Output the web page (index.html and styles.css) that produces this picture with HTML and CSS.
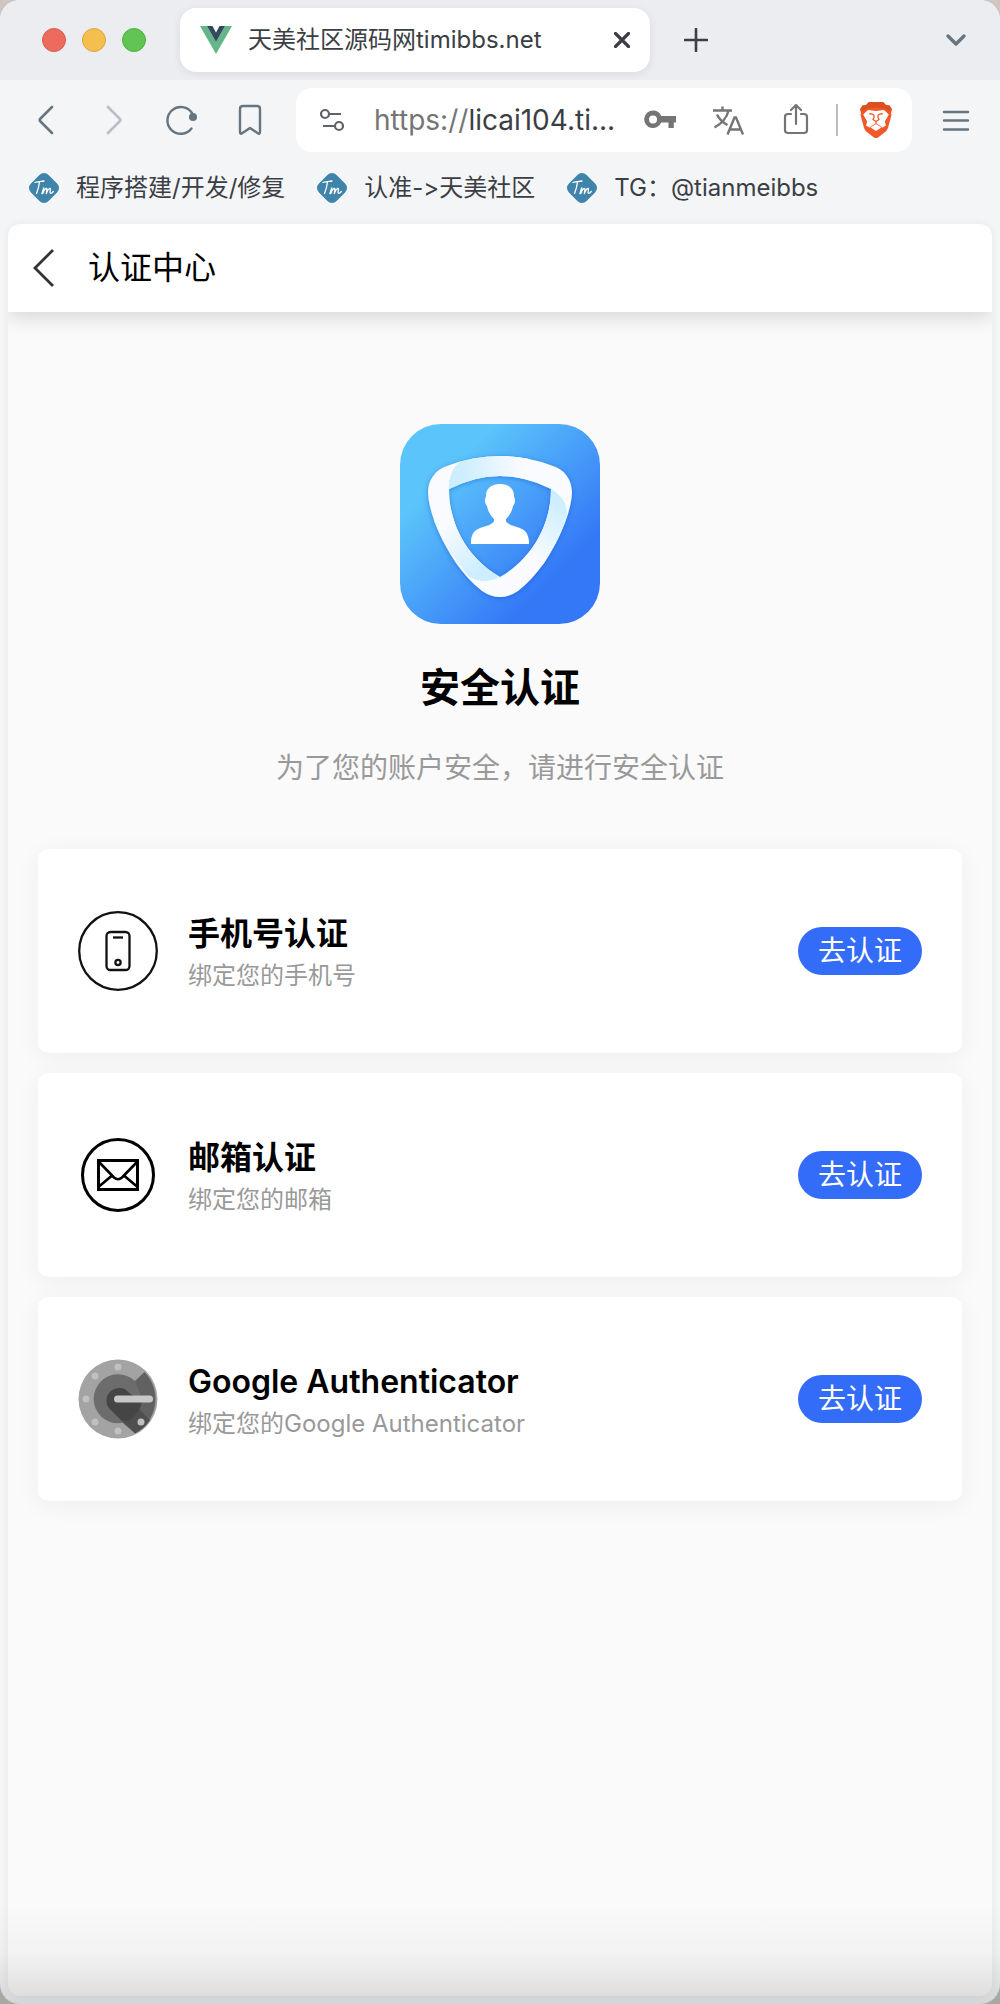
FILE: index.html
```html
<!DOCTYPE html>
<html lang="zh-CN">
<head>
<meta charset="utf-8">
<meta name="viewport" content="width=device-width, initial-scale=1">
<title>天美社区源码网timibbs.net</title>
<link rel="stylesheet" href="styles.css">
</head>
<body>
<svg class="sprite" aria-hidden="true">
  <symbol id="tm" viewBox="0 0 30 30">
    <rect x="2.500" y="2.500" width="25" height="25" rx="6.500" transform="rotate(45 15 15)" fill="#3f85ab"/>
    <path d="M6 9.500C9 8 12 8.500 15 8M10.500 9C10 13 9 17 7.500 20.500M13 20.500C13.500 18.500 14.300 16.500 14.800 14.800C14.500 17.500 14 19 13.800 20.500C15 17 16.500 15.500 17.500 15.300C18.400 15.300 17.500 18.500 17.300 20.500C18.500 17.500 20 15.500 21 15.300C22.300 15.300 20.300 19.500 21.300 20.300C22.300 20.800 23.500 19.500 24.300 18.500" fill="none" stroke="#fff" stroke-width="1.300" stroke-linecap="round" stroke-linejoin="round"/>
  </symbol>
</svg>
<div class="window">
  <header class="tab-bar">
    <div class="lights">
      <button class="light light-close" aria-label="关闭窗口"></button>
      <button class="light light-min" aria-label="最小化"></button>
      <button class="light light-max" aria-label="最大化"></button>
    </div>
    <div class="tab">
      <svg width="32" height="28" viewBox="0 0 32 28" aria-hidden="true"><path d="M0 0H7L16 16L25 0H32L16 28Z" fill="#64b587"/><path d="M7 0H12.500L16 6.500L19.500 0H25L16 16Z" fill="#35495e"/></svg>
      <span class="tab-title">天美社区源码网timibbs.net</span>
      <button class="icon-button tab-close" aria-label="关闭标签页"><svg width="16" height="16" viewBox="0 0 16 16"><path d="M1.500 1.500L14.500 14.500M14.500 1.500L1.500 14.500" fill="none" stroke="#3b3e44" stroke-width="3.200" stroke-linecap="round"/></svg></button>
    </div>
    <button class="icon-button tab-new" aria-label="新标签页"><svg width="24" height="24" viewBox="0 0 24 24"><path d="M12 1V23M1 12H23" stroke="#3b3e44" stroke-width="2.600" stroke-linecap="round"/></svg></button>
    <button class="icon-button tab-list" aria-label="搜索标签页"><svg width="24" height="16" viewBox="0 0 24 16"><path d="M4 4L12 12L20 4" fill="none" stroke="#66757f" stroke-width="3.400" stroke-linecap="round" stroke-linejoin="round"/></svg></button>
  </header>

  <nav class="toolbar" aria-label="浏览器工具栏">
    <div class="nav-buttons">
      <button class="icon-button" aria-label="后退"><svg width="40" height="40" viewBox="0 0 40 40"><path d="M26 7L14.500 18.500Q13 20 14.500 21.500L26 33" fill="none" stroke="#66757f" stroke-width="2.600" stroke-linecap="round"/></svg></button>
      <button class="icon-button" aria-label="前进" disabled><svg width="40" height="40" viewBox="0 0 40 40"><path d="M14 7L25.500 18.500Q27 20 25.500 21.500L14 33" fill="none" stroke="#b7bec5" stroke-width="2.600" stroke-linecap="round"/></svg></button>
      <button class="icon-button" aria-label="重新加载"><svg width="40" height="40" viewBox="0 0 40 40"><path d="M30 13A13.400 13.400 0 1 0 29.500 28.500" fill="none" stroke="#66757f" stroke-width="2.400" stroke-linecap="round"/><circle cx="31" cy="17" r="4" fill="#66757f"/></svg></button>
      <button class="icon-button" aria-label="添加书签"><svg width="40" height="40" viewBox="0 0 40 40"><path d="M13 6H27Q30 6 30 9V32Q30 35 27.500 33L20 28L12.500 33Q10 35 10 32V9Q10 6 13 6Z" fill="none" stroke="#66757f" stroke-width="2.400" stroke-linejoin="round"/></svg></button>
    </div>
    <div class="omnibox">
      <button class="icon-button" aria-label="网站信息"><svg width="24" height="24" viewBox="0 0 24 24"><g fill="none" stroke="#5f6368" stroke-width="2.200"><circle cx="5" cy="6" r="4"/><path d="M9 6H21M3 18H15"/><circle cx="19" cy="18" r="4"/></g></svg></button>
      <div class="url" role="textbox" contenteditable="true" spellcheck="false" aria-label="地址栏"><span class="url-scheme">https://</span>licai104.ti...</div>
      <div class="omnibox-actions">
        <button class="icon-button" aria-label="密码"><svg width="32" height="32" viewBox="0 0 32 32"><path fill-rule="evenodd" d="M9 6.500A8.700 8.700 0 0 1 17.200 12H32V18.500H29.800V24H24.500V18.500H17.200A8.800 8.800 0 1 1 9 6.500ZM9 11.500A4 4 0 1 0 9 19.500A4 4 0 0 0 9 11.500Z" fill="#757575"/></svg></button>
        <button class="icon-button" aria-label="翻译"><svg width="32" height="32" viewBox="0 0 32 32"><g fill="none" stroke="#757575" stroke-width="2.400"><path d="M1 6.500H20M10.500 2.500V6.500M16.500 7C14.500 14 9 20 2.500 23.500M5 10.500C7 15 11 18.500 15.500 21"/><path d="M15.500 30.500L22.500 13.500H24L31 30.500M18 25.500H28.500"/></g></svg></button>
        <button class="icon-button" aria-label="分享"><svg width="32" height="32" viewBox="0 0 32 32"><g fill="none" stroke="#757575" stroke-width="2.200" stroke-linecap="round" stroke-linejoin="round"><path d="M16 20V1.500M11 6L16 1L21 6M11 10H8Q5 10 5 13V26Q5 29 8 29H24Q27 29 27 26V13Q27 10 24 10H21"/></g></svg></button>
        <span class="divider"></span>
        <button class="icon-button" aria-label="Brave 防护"><svg width="32" height="36" viewBox="0 0 32 36"><path d="M9 0H23L26 3L29.500 3.500L32 7.500L31 11L31.500 13L28 26Q27 29 24.500 30.500L18 35.500Q16 36.500 14 35.500L7.500 30.500Q5 29 4 26L0.500 13L1 11L0 7.500L2.500 3.500L6 3Z" fill="#f1592a"/><path d="M9 0H23L26 3L29.500 3.500L32 7.500L29 9.500L24 6H8L3 9.500L0 7.500L2.500 3.500L6 3Z" fill="#dd4f20"/><path d="M8 8L16 9L24 8L28.800 12.500L24.800 19.500L26 23.500L22.500 25.500L16 21L9.500 25.500L6 23.500L7.200 19.500L3.200 12.500Z" fill="#fff"/><path d="M16 22L21.500 25.500L16 29L10.500 25.500Z" fill="#fff"/><path d="M9 12Q11.500 11.200 14 13.200V15.500L13 17.500L16 19.500L19 17.500L18 15.500V13.200Q20.500 11.200 23 12M16 19.500V21.500" fill="none" stroke="#f1592a" stroke-width="1.300"/></svg></button>
      </div>
    </div>
    <button class="icon-button menu" aria-label="菜单"><svg width="28" height="24" viewBox="0 0 28 24"><path d="M2 4H26M2 12.500H26M2 21.500H26" stroke="#66757f" stroke-width="2.400" stroke-linecap="round"/></svg></button>
  </nav>

  <nav class="bookmarks" aria-label="书签">
    <a href="#build" class="bookmark"><svg width="30" height="30" aria-hidden="true"><use href="#tm"/></svg>程序搭建/开发/修复</a>
    <a href="#community" class="bookmark"><svg width="30" height="30" aria-hidden="true"><use href="#tm"/></svg>认准-&gt;天美社区</a>
    <a href="#tg" class="bookmark"><svg width="30" height="30" aria-hidden="true"><use href="#tm"/></svg>TG：@tianmeibbs</a>
  </nav>

  <div class="page">
    <header class="app-bar">
      <button class="icon-button" aria-label="返回"><svg width="24" height="40" viewBox="0 0 24 40"><path d="M21 2L3 20L21 38" fill="none" stroke="#333" stroke-width="2.800"/></svg></button>
      <h1 class="app-title">认证中心</h1>
    </header>
    <main class="content">
      <section class="intro">
        <svg class="logo" viewBox="0 0 200 200" aria-hidden="true">
          <defs>
            <linearGradient id="bg" x1="0" y1="0" x2="1" y2="1"><stop offset=".24" stop-color="#5bc4fa"/><stop offset=".77" stop-color="#3478f7"/></linearGradient>
            <linearGradient id="fold-top" gradientUnits="userSpaceOnUse" x1="50" y1="50" x2="124" y2="46"><stop offset=".15" stop-color="#cdeefe"/><stop offset="1" stop-color="#fafbff"/></linearGradient>
            <linearGradient id="fold-right" gradientUnits="userSpaceOnUse" x1="163" y1="72" x2="133" y2="136"><stop offset=".1" stop-color="#cdeefe"/><stop offset="1" stop-color="#fafbff"/></linearGradient>
            <linearGradient id="fold-left" gradientUnits="userSpaceOnUse" x1="86" y1="155" x2="44" y2="100"><stop offset=".15" stop-color="#cdeefe"/><stop offset="1" stop-color="#fafbff"/></linearGradient>
            <filter id="glow" x="-10%" y="-10%" width="120%" height="120%"><feDropShadow dx="0" dy="1" stdDeviation="2.500" flood-color="#1553c8" flood-opacity=".5"/></filter>
            <clipPath id="ring"><path clip-rule="evenodd" d="M28 69C28 56 35 46 47 42Q73 32 100 32Q127 32 153 42C165 46 172 56 172 69C171 90 158 118 144 139Q132 156 118 167Q100 179 82 167Q68 156 56 139C42 118 29 90 28 69ZM49 65C49 100 67 134 100 153C133 134 151 100 151 65Q100 39 49 65Z"/></clipPath>
          </defs>
          <rect width="200" height="200" rx="41" fill="url(#bg)"/>
          <path filter="url(#glow)" fill="#fafbff" fill-rule="evenodd" d="M28 69C28 56 35 46 47 42Q73 32 100 32Q127 32 153 42C165 46 172 56 172 69C171 90 158 118 144 139Q132 156 118 167Q100 179 82 167Q68 156 56 139C42 118 29 90 28 69ZM49 65C49 100 67 134 100 153C133 134 151 100 151 65Q100 39 49 65Z"/>
          <g clip-path="url(#ring)">
            <path d="M49 65C49 47 56 37 70 33L130 28V60H49Z" fill="url(#fold-top)"/><path d="M49 65V56H62V65Z" fill="#cdeefe"/>
            <path d="M151 65C160 70 167 78 167 91L150 145L120 130L149 65Z" fill="url(#fold-right)"/>
            <path d="M100 153C88 159 78 158 68 152L30 100L48 80L75 130Z" fill="url(#fold-left)"/>
          </g>
          <path d="M100 60C110 60 114.500 66 114 73C116 75 115 80 113 82C112 88 109 92 106 95Q105 98 109 100C115 104 128 102 129 117V120H71V117C72 102 85 104 91 100Q95 98 94 95C91 92 88 88 87 82C85 80 84 75 86 73C85.500 66 90 60 100 60Z" fill="#fff"/>
        </svg>
        <h2 class="intro-title">安全认证</h2>
        <p class="intro-text">为了您的账户安全，请进行安全认证</p>
      </section>
      <ul class="cards">
        <li class="card">
          <svg class="card-icon" viewBox="0 0 80 80" aria-hidden="true"><g fill="none" stroke="#111" stroke-width="2.300"><circle cx="40" cy="40" r="38.800"/><rect x="28.500" y="21" width="23" height="38" rx="4"/><path d="M35 26.500H45"/><circle cx="40" cy="51.500" r="2.600"/></g></svg>
          <div class="card-text"><h3 class="card-title">手机号认证</h3><p class="card-note">绑定您的手机号</p></div>
          <button class="action">去认证</button>
        </li>
        <li class="card">
          <svg class="card-icon" viewBox="0 0 80 80" aria-hidden="true"><g fill="none" stroke="#000" stroke-width="3"><circle cx="40" cy="40" r="35.500"/><rect x="20.500" y="25.500" width="39" height="29"/><path stroke-width="2.600" d="M21 27L36 42.500Q40 46 44 42.500L59 27M21 51.500L33.500 41M59 51.500L46.500 41"/></g></svg>
          <div class="card-text"><h3 class="card-title">邮箱认证</h3><p class="card-note">绑定您的邮箱</p></div>
          <button class="action">去认证</button>
        </li>
        <li class="card">
          <svg class="card-icon" viewBox="0 0 80 80" aria-hidden="true">
            <circle cx="40" cy="40" r="39.500" fill="#a3a3a3"/>
            <path d="M57 22L66.500 13A38.500 38.500 0 0 1 57 74L40 60Z" fill="#616161"/>
            <path d="M57 22A24.500 24.500 0 1 0 57.300 57.300L64 40Z" fill="#6c6c6c"/>
            <path d="M31 49L57 74.500A39 39 0 0 0 72 61L62 51H40Z" fill="#4f4f4f"/>
            <path d="M31 49A12.500 12.500 0 1 1 51 34L64 42Q63 52 52 61L44 62Z" fill="#454545"/>
            <rect x="36" y="36.500" width="39" height="7" rx="3.500" fill="#c8c8c6"/>
            <g fill="#c0c0c0"><circle cx="40" cy="8" r="3.500"/><circle cx="17" cy="17" r="3.500"/><circle cx="8" cy="40" r="3.500"/><circle cx="17" cy="63" r="3.500"/><circle cx="40" cy="72" r="3.500"/><circle cx="63" cy="63" r="3.500"/></g>
          </svg>
          <div class="card-text"><h3 class="card-title">Google Authenticator</h3><p class="card-note">绑定您的Google Authenticator</p></div>
          <button class="action">去认证</button>
        </li>
      </ul>
    </main>
  </div>
</div>
</body>
</html>
```
FILE: styles.css
```css
* { box-sizing: border-box; }

body {
  margin: 0;
  background: linear-gradient(#cfc6c0, #a9a9a4);
  font-family: Inter, "Noto Sans CJK SC", sans-serif;
  font-variant-ligatures: none;
  color: #000;
}

h1, h2, h3, p, ul { margin: 0; padding: 0; }

button {
  padding: 0;
  border: 0;
  background: none;
  font: inherit;
  color: inherit;
}

svg { display: block; flex: none; }

.sprite { position: absolute; width: 0; height: 0; }

.icon-button { display: flex; align-items: center; justify-content: center; flex: none; }

.window {
  position: relative;
  display: flex;
  flex-direction: column;
  min-height: 100vh;
  padding-bottom: 8px;
  overflow: hidden;
  border-radius: 20px;
  background: #f3f5f7;
}

/* Shade that falls over the lower edge of the window */
.window::after {
  content: "";
  position: absolute;
  inset: auto 0 0;
  height: 100px;
  background: linear-gradient(rgba(0, 0, 0, 0), rgba(0, 0, 0, .03) 50%, rgba(0, 0, 0, .13));
  pointer-events: none;
}

/* Tabs */
.tab-bar {
  display: flex;
  align-items: center;
  height: 80px;
  padding: 0 32px 0 42px;
  background: #ecedf1;
}

.lights { display: flex; gap: 16px; margin-right: 34px; }
.light { width: 24px; height: 24px; border: 1px solid; border-radius: 50%; }
.light-close { background: #ed6a5e; border-color: #d95a4e; }
.light-min { background: #f5bf4f; border-color: #dda53c; }
.light-max { background: #61c554; border-color: #50ae43; }

.tab {
  display: flex;
  align-items: center;
  gap: 16px;
  width: 470px;
  height: 64px;
  padding: 0 20px;
  border-radius: 16px;
  background: #fff;
  box-shadow: 0 2px 8px rgba(0, 0, 0, .08);
}

.tab-title { flex: 1; font-size: 24px; line-height: 32px; color: #3b3e44; white-space: nowrap; }
.tab-new { margin-left: 34px; }
.tab-list { margin-left: auto; }

/* Toolbar */
.toolbar {
  display: flex;
  align-items: center;
  gap: 26px;
  height: 80px;
  padding: 0 30px 0 26px;
}

.nav-buttons { display: flex; gap: 28px; }

.omnibox {
  display: flex;
  align-items: center;
  flex: 1;
  min-width: 0;
  height: 64px;
  padding: 0 20px 0 24px;
  border-radius: 16px;
  background: #fff;
}

.url {
  flex: 1;
  min-width: 0;
  margin-left: 30px;
  overflow: hidden;
  font-size: 28px;
  line-height: 40px;
  color: #3b3e44;
  white-space: nowrap;
}

.url-scheme { color: #757575; }
.omnibox-actions { display: flex; align-items: center; gap: 36px; }
.divider { width: 2px; height: 32px; margin: 0 -14px 0 -12px; background: #bcbcbc; }
.menu { margin-left: 4px; }

/* Bookmarks */
.bookmarks { display: flex; gap: 32px; height: 64px; padding: 12px 29px 0; }

.bookmark {
  display: flex;
  align-items: center;
  gap: 17px;
  height: 32px;
  font-size: 24px;
  line-height: 32px;
  color: #3b3e44;
  text-decoration: none;
  white-space: nowrap;
}

/* Page */
.page {
  flex: 1;
  margin: 0 8px;
  overflow: hidden;
  border-radius: 12px;
  background: #fafafa;
  box-shadow: 0 0 8px rgba(0, 0, 0, .06);
}

.app-bar {
  display: flex;
  align-items: center;
  gap: 32px;
  height: 88px;
  padding: 0 24px;
  background: #fff;
  box-shadow: 0 4px 20px rgba(0, 0, 0, .16);
}

.app-title { font-size: 32px; line-height: 48px; font-weight: 400; }

.content { padding: 112px 30px 40px; }

.intro { display: flex; flex-direction: column; align-items: center; text-align: center; }
.logo { width: 200px; height: 200px; }
.intro-title { margin-top: 36px; font-size: 40px; line-height: 56px; font-weight: 700; }
.intro-text { margin-top: 32px; font-size: 28px; line-height: 40px; color: #999; }

.cards { display: flex; flex-direction: column; gap: 20px; margin-top: 61px; list-style: none; }

.card {
  display: flex;
  align-items: center;
  gap: 30px;
  min-height: 204px;
  padding: 0 40px;
  border-radius: 10px;
  background: #fff;
  box-shadow: 0 4px 24px rgba(0, 0, 0, .05);
}

.card-icon { width: 80px; height: 80px; }
.card-text { flex: 1; padding-top: 2px; }
.card-title { font-size: 32px; line-height: 48px; font-weight: 600; }
.card-note { font-size: 24px; line-height: 36px; color: #999; }

.action {
  width: 124px;
  height: 48px;
  border-radius: 24px;
  background: #326cf9;
  font-size: 28px;
  line-height: 48px;
  color: #fff;
}
```
